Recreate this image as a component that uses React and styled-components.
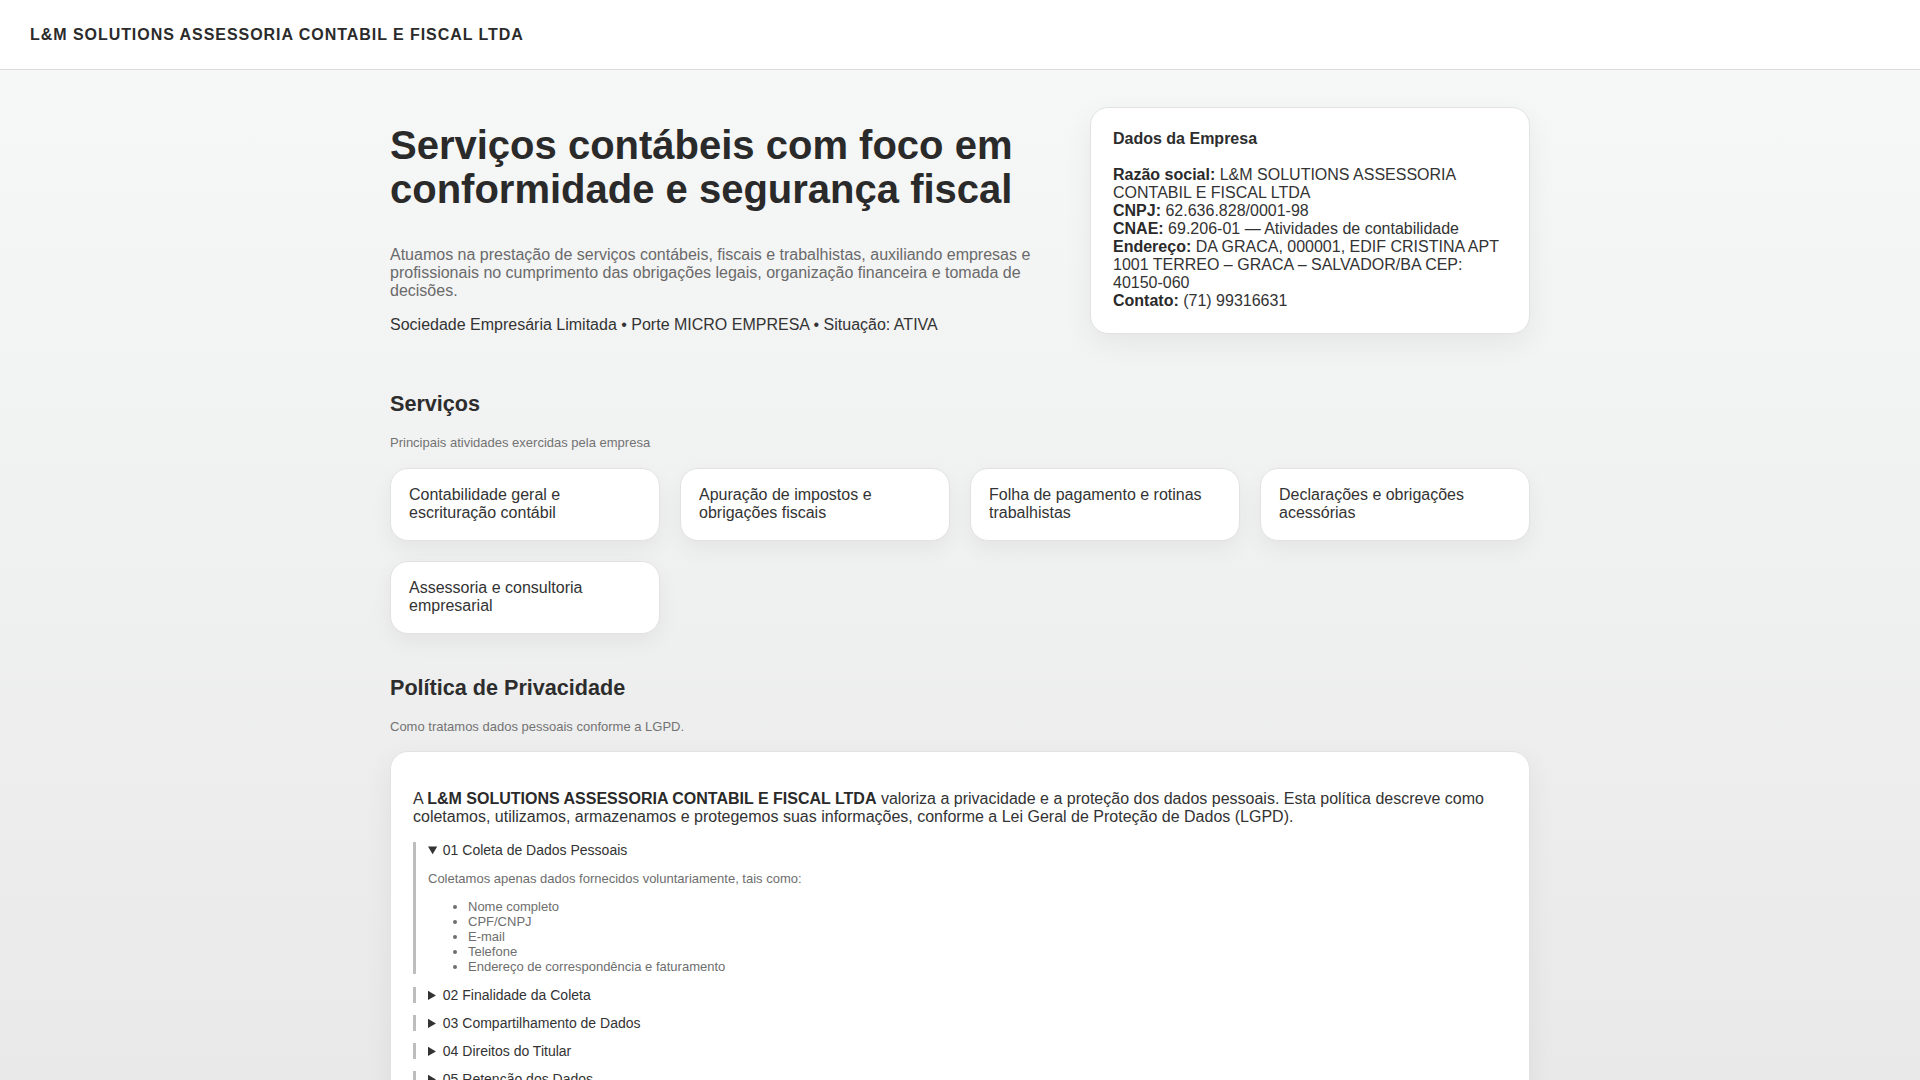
import React from 'react';
import styled, { createGlobalStyle } from 'styled-components';

const GlobalStyle = createGlobalStyle`
  * { box-sizing: border-box; }
  html, body { margin: 0; padding: 0; }
  body {
    font-family: "Liberation Sans", Arial, Helvetica, sans-serif;
    color: #333;
    background: linear-gradient(180deg, #f7f8f8 0%, #e9e9e9 100%) fixed;
    min-height: 100vh;
  }
`;

const Header = styled.header`
  height: 70px;
  background: #ffffff;
  border-bottom: 1px solid #dadada;
  display: flex;
  align-items: center;
  padding: 0 30px;
`;

const Brand = styled.div`
  font-size: 16px;
  font-weight: 700;
  letter-spacing: 0.95px;
  color: #2b2b2b;
`;

const Main = styled.main`
  max-width: 1140px;
  margin: 0 auto;
  padding: 37px 0 60px;
`;

const Hero = styled.section`
  display: grid;
  grid-template-columns: 1.5fr 1fr;
  column-gap: 40px;
  align-items: start;
`;

const HeroText = styled.div`
  display: flex;
  flex-direction: column;
`;

const Title = styled.h1`
  font-size: 40px;
  line-height: 1.1;
  font-weight: 700;
  color: #2a2a2a;
  margin: 16px 0 35px;
`;

const Lead = styled.p`
  font-size: 16px;
  line-height: 18px;
  color: #6a6a6a;
  margin: 0 0 16px;
`;

const Meta = styled.p`
  font-size: 16px;
  line-height: 18px;
  color: #333;
  margin: 0 0 16px;
`;

const InfoCard = styled.aside`
  background: #fff;
  border: 1px solid #e2e2e2;
  border-radius: 18px;
  padding: 22px 22px 23px;
  box-shadow: 0 10px 30px rgba(0, 0, 0, 0.06);
`;

const InfoTitle = styled.h3`
  font-size: 16px;
  line-height: 18px;
  font-weight: 700;
  color: #2d2d2d;
  margin: 0 0 18px;
`;

const InfoRow = styled.div`
  font-size: 16px;
  line-height: 18px;
  color: #333;

  strong {
    font-weight: 700;
    color: #2a2a2a;
  }
`;

const Section = styled.section`
  margin-top: 42px;
`;

const SectionTitle = styled.h2`
  font-size: 21.6px;
  line-height: 1.1;
  font-weight: 700;
  color: #2d2d2d;
  margin: 0 0 20.6px;
`;

const SectionSub = styled.p`
  font-size: 13px;
  line-height: 1.1;
  color: #737373;
  margin: 0 0 17px;
`;

const ServiceGrid = styled.div`
  display: grid;
  grid-template-columns: repeat(4, 1fr);
  gap: 20px;
`;

const ServiceCard = styled.div`
  background: #fff;
  border: 1px solid #e2e2e2;
  border-radius: 18px;
  padding: 17.5px 18px;
  font-size: 16px;
  line-height: 18px;
  color: #333;
  box-shadow: 0 8px 22px rgba(0, 0, 0, 0.05);
`;

const PolicyCard = styled.div`
  background: #fff;
  border: 1px solid #e2e2e2;
  border-radius: 18px;
  padding: 22px;
  box-shadow: 0 10px 30px rgba(0, 0, 0, 0.06);
`;

const Intro = styled.p`
  font-size: 16px;
  line-height: 18px;
  color: #333;
  margin: 16px 0;

  strong {
    font-weight: 700;
    color: #2a2a2a;
  }
`;

const Item = styled.details`
  border-left: 3px solid #bdbdbd;
  padding-left: 12px;
  margin: 0 0 12px;
`;

const ItemSummary = styled.summary`
  font-size: 14px;
  line-height: normal;
  color: #333;
  cursor: pointer;
`;

const ItemText = styled.p`
  font-size: 13px;
  line-height: normal;
  color: #6e6e6e;
  margin: 13px 0;
`;

const ItemList = styled.ul`
  font-size: 13px;
  line-height: normal;
  color: #6e6e6e;
  margin: 13px 0;
  padding-left: 40px;
`;

const services = [
  'Contabilidade geral e escrituração contábil',
  'Apuração de impostos e obrigações fiscais',
  'Folha de pagamento e rotinas trabalhistas',
  'Declarações e obrigações acessórias',
  'Assessoria e consultoria empresarial',
];

const policy = [
  {
    title: '01 Coleta de Dados Pessoais',
    text: 'Coletamos apenas dados fornecidos voluntariamente, tais como:',
    list: ['Nome completo', 'CPF/CNPJ', 'E-mail', 'Telefone', 'Endereço de correspondência e faturamento'],
    open: true,
  },
  {
    title: '02 Finalidade da Coleta',
    text: 'Os dados são utilizados para a prestação dos serviços contratados, cumprimento de obrigações legais e comunicação com o cliente.',
  },
  {
    title: '03 Compartilhamento de Dados',
    text: 'Os dados somente são compartilhados com órgãos públicos quando exigido por lei.',
  },
  {
    title: '04 Direitos do Titular',
    text: 'O titular pode solicitar acesso, correção ou exclusão de seus dados a qualquer momento.',
  },
  {
    title: '05 Retenção dos Dados',
    text: 'Os dados são mantidos pelo prazo necessário ao cumprimento das obrigações legais.',
  },
  {
    title: '06 Segurança da Informação',
    text: 'Adotamos medidas técnicas e administrativas para proteger os dados pessoais.',
  },
  {
    title: '07 Contato',
    text: 'Dúvidas sobre esta política podem ser enviadas pelo telefone (71) 99316631.',
  },
];

export default function App() {
  return (
    <>
      <GlobalStyle />
      <Header>
        <Brand>L&amp;M SOLUTIONS ASSESSORIA CONTABIL E FISCAL LTDA</Brand>
      </Header>
      <Main>
        <Hero>
          <HeroText>
            <Title>Serviços contábeis com foco em conformidade e segurança fiscal</Title>
            <Lead>
              Atuamos na prestação de serviços contábeis, fiscais e trabalhistas, auxiliando empresas e
              profissionais no cumprimento das obrigações legais, organização financeira e tomada de decisões.
            </Lead>
            <Meta>Sociedade Empresária Limitada • Porte MICRO EMPRESA • Situação: ATIVA</Meta>
          </HeroText>
          <InfoCard>
            <InfoTitle>Dados da Empresa</InfoTitle>
            <InfoRow>
              <strong>Razão social:</strong> L&amp;M SOLUTIONS ASSESSORIA CONTABIL E FISCAL LTDA
            </InfoRow>
            <InfoRow>
              <strong>CNPJ:</strong> 62.636.828/0001-98
            </InfoRow>
            <InfoRow>
              <strong>CNAE:</strong> 69.206-01 — Atividades de contabilidade
            </InfoRow>
            <InfoRow>
              <strong>Endereço:</strong> DA GRACA, 000001, EDIF CRISTINA APT 1001 TERREO – GRACA – SALVADOR/BA CEP:
              40150-060
            </InfoRow>
            <InfoRow>
              <strong>Contato:</strong> (71) 99316631
            </InfoRow>
          </InfoCard>
        </Hero>

        <Section>
          <SectionTitle>Serviços</SectionTitle>
          <SectionSub>Principais atividades exercidas pela empresa</SectionSub>
          <ServiceGrid>
            {services.map((s) => (
              <ServiceCard key={s}>{s}</ServiceCard>
            ))}
          </ServiceGrid>
        </Section>

        <Section>
          <SectionTitle>Política de Privacidade</SectionTitle>
          <SectionSub>Como tratamos dados pessoais conforme a LGPD.</SectionSub>
          <PolicyCard>
            <Intro>
              A <strong>L&amp;M SOLUTIONS ASSESSORIA CONTABIL E FISCAL LTDA</strong> valoriza a privacidade e a
              proteção dos dados pessoais. Esta política descreve como coletamos, utilizamos, armazenamos e
              protegemos suas informações, conforme a Lei Geral de Proteção de Dados (LGPD).
            </Intro>
            {policy.map((p) => (
              <Item key={p.title} open={p.open}>
                <ItemSummary>{p.title}</ItemSummary>
                <ItemText>{p.text}</ItemText>
                {p.list && (
                  <ItemList>
                    {p.list.map((l) => (
                      <li key={l}>{l}</li>
                    ))}
                  </ItemList>
                )}
              </Item>
            ))}
          </PolicyCard>
        </Section>
      </Main>
    </>
  );
}
